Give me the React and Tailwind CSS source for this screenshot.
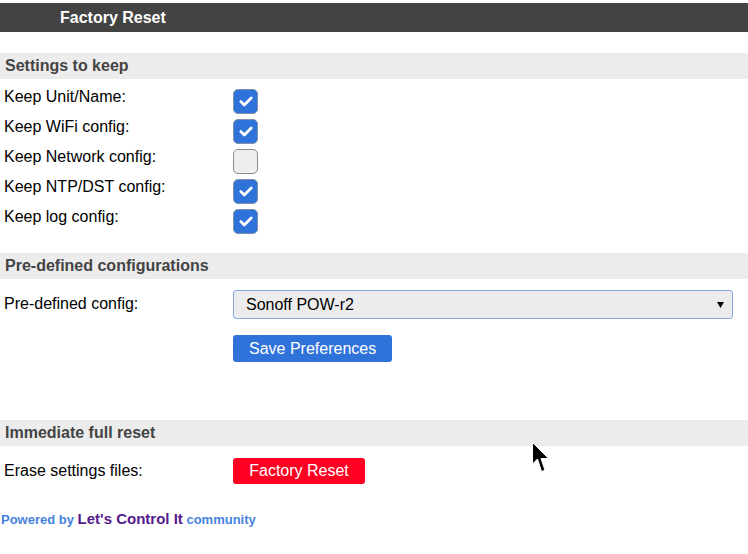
import React from "react";

const FONT = { fontFamily: '"Liberation Sans", Arial, sans-serif' };

const keepOptions = [
  { label: "Keep Unit/Name:", checked: true },
  { label: "Keep WiFi config:", checked: true },
  { label: "Keep Network config:", checked: false },
  { label: "Keep NTP/DST config:", checked: true },
  { label: "Keep log config:", checked: true },
];

function SectionHeader({ children }) {
  return (
    <div className="h-[26px] bg-[#ececec] flex items-center pl-[5px] text-[16px] leading-[18px] font-bold text-[#444444]">
      {children}
    </div>
  );
}

function Checkbox({ checked }) {
  if (!checked) {
    return (
      <div className="w-[25px] h-[25px] rounded-[5px] bg-[#eeeeee] border border-[#8c8c8c]" />
    );
  }
  return (
    <div className="w-[25px] h-[25px] rounded-[5px] bg-[#2f72d9] border border-[#7f8fa8] flex items-center justify-center">
      <svg width="14" height="11" viewBox="0 0 14 11">
        <path d="M1.8 5.6 L5.3 8.9 L12.2 2" fill="none" stroke="#ffffff" strokeWidth="2.8" strokeLinecap="round" strokeLinejoin="round" />
      </svg>
    </div>
  );
}

export default function App() {
  return (
    <div className="relative w-[748px] h-[554px] bg-white overflow-hidden text-black" style={FONT}>
      <div className="pt-[3px]">
        {/* HEADER */}
        <div className="h-[29px] bg-[#434343] flex items-center pl-[60px] text-white text-[16px] leading-[18px] font-bold">
          Factory Reset
        </div>

        {/* SETTINGS TO KEEP */}
        <div className="mt-[21px]">
          <SectionHeader>Settings to keep</SectionHeader>
        </div>
        <div className="mt-[5px]">
          {keepOptions.map((opt) => (
            <div key={opt.label} className="h-[30px] flex items-start">
              <div className="w-[233px] pl-[4px] pt-[4px] text-[16px] leading-[18px]">{opt.label}</div>
              <div className="mt-[5px]">
                <Checkbox checked={opt.checked} />
              </div>
            </div>
          ))}
        </div>

        {/* PRE-DEFINED */}
        <div className="mt-[19px]">
          <SectionHeader>Pre-defined configurations</SectionHeader>
        </div>
        <div className="mt-[11px] flex items-start">
          <div className="w-[233px] pl-[4px] pt-[5px] text-[16px] leading-[18px]">Pre-defined config:</div>
          <div className="relative w-[500px] h-[29px] bg-[#ececec] border border-[#86a9e6] rounded-[3px] flex items-center pl-[12px] text-[16px] leading-[18px]">
            Sonoff POW-r2
            <svg className="absolute right-[8px] top-[11px]" width="7" height="6" viewBox="0 0 7 6">
              <path d="M0 0 H7 L3.5 6 Z" fill="#000000" />
            </svg>
          </div>
        </div>
        <div className="mt-[16px] pl-[233px]">
          <button className="h-[27px] px-[16px] bg-[#2f72d9] text-white rounded-[3px] text-[16px] leading-[18px]">
            Save Preferences
          </button>
        </div>

        {/* IMMEDIATE RESET */}
        <div className="mt-[58px]">
          <SectionHeader>Immediate full reset</SectionHeader>
        </div>
        <div className="mt-[12px] flex items-start">
          <div className="w-[233px] pl-[4px] pt-[4px] text-[16px] leading-[18px]">Erase settings files:</div>
          <button className="h-[26px] w-[132px] bg-[#ff0022] text-white rounded-[3px] text-[16px] leading-[18px]">
            Factory Reset
          </button>
        </div>

        {/* FOOTER */}
        <div className="mt-[27px] pl-[1px] font-bold text-[13px] leading-[16px] text-[#4682e0]">
          Powered by <span className="text-[15px] text-[#551a8b]">Let's Control It</span> community
        </div>
      </div>

      {/* mouse cursor */}
      <svg className="absolute left-[532px] top-[442px]" width="18" height="31" viewBox="0 0 18 31">
        <path d="M0.5 0.5 L0.5 22 L5.5 17 L9.5 29.5 L13 28.3 L9 16.5 L16.5 16.5 Z" fill="#000000" stroke="#ffffff" strokeWidth="1" />
      </svg>
    </div>
  );
}
